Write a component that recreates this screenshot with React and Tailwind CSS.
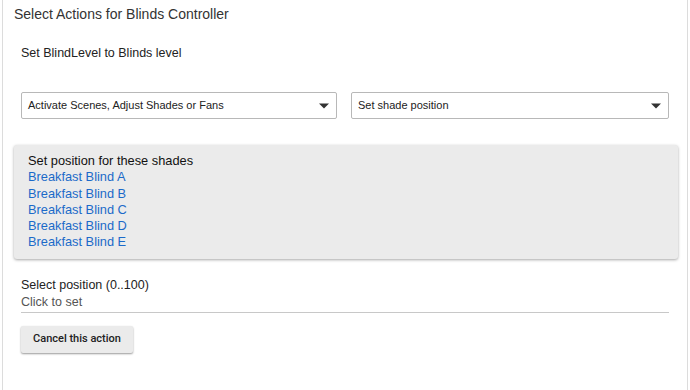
export default function App() {
  const blinds = ["Breakfast Blind A", "Breakfast Blind B", "Breakfast Blind C", "Breakfast Blind D", "Breakfast Blind E"];
  const Arrow = () => (
    <svg width="10" height="6" viewBox="0 0 10 5"><path d="M0 0 L10 0 L5 5 Z" fill="#333" /></svg>
  );
  return (
    <div className="w-[690px] h-[390px] bg-white flex" style={{ fontFamily: '"Liberation Sans", Arial, sans-serif' }}>
      <div className="w-[2px] bg-white" />
      <div className="flex-1 border-l border-r border-[#dcdcdc] flex flex-col text-[#222]">
        <div className="pl-[11px] pt-[5px] text-[14px] text-[#333] leading-[18px]">Select Actions for Blinds Controller</div>
        <div className="pl-[18px] pt-[22px] text-[12.5px] text-[#222] leading-[16px]">Set BlindLevel to Blinds level</div>
        <div className="flex gap-[14px] pl-[18px] pr-[18px] mt-[31px]">
          <div className="w-[316px] h-[27px] border border-[#b8b8b8] rounded-[2px] flex items-center justify-between pl-[6px] pr-[7px] text-[11px] text-[#222]">
            <span>Activate Scenes, Adjust Shades or Fans</span>
            <Arrow />
          </div>
          <div className="w-[318px] h-[27px] border border-[#b8b8b8] rounded-[2px] flex items-center justify-between pl-[6px] pr-[7px] text-[11px] text-[#222]">
            <span>Set shade position</span>
            <Arrow />
          </div>
        </div>
        <div className="ml-[11px] mr-[9px] mt-[26px] bg-[#ebebeb] rounded-[3px] shadow-[0_1px_3px_rgba(0,0,0,0.35)] pl-[14px] pt-[8px] pb-[8px] text-[12.8px] leading-[16.3px]">
          <div className="text-[#111]">Set position for these shades</div>
          {blinds.map((b) => (
            <div key={b} className="text-[#1b6ac9]">{b}</div>
          ))}
        </div>
        <div className="pl-[18px] pr-[18px] mt-[18px]">
          <div className="text-[12.5px] text-[#222] leading-[16px]">Select position (0..100)</div>
          <div className="text-[12.5px] text-[#555] leading-[16px] mt-[1px] pb-[2px] border-b border-[#c8c8c8]">Click to set</div>
        </div>
        <div className="pl-[18px] mt-[12px]">
          <div className="inline-flex items-center justify-center w-[112px] h-[27px] bg-[#ebebeb] rounded-[2px] shadow-[0_1px_2px_rgba(0,0,0,0.4)] text-[11px] font-medium text-[#222]" style={{ fontFamily: 'Roboto, sans-serif' }}>
            Cancel this action
          </div>
        </div>
      </div>
      <div className="w-[2px] bg-white" />
    </div>
  );
}
